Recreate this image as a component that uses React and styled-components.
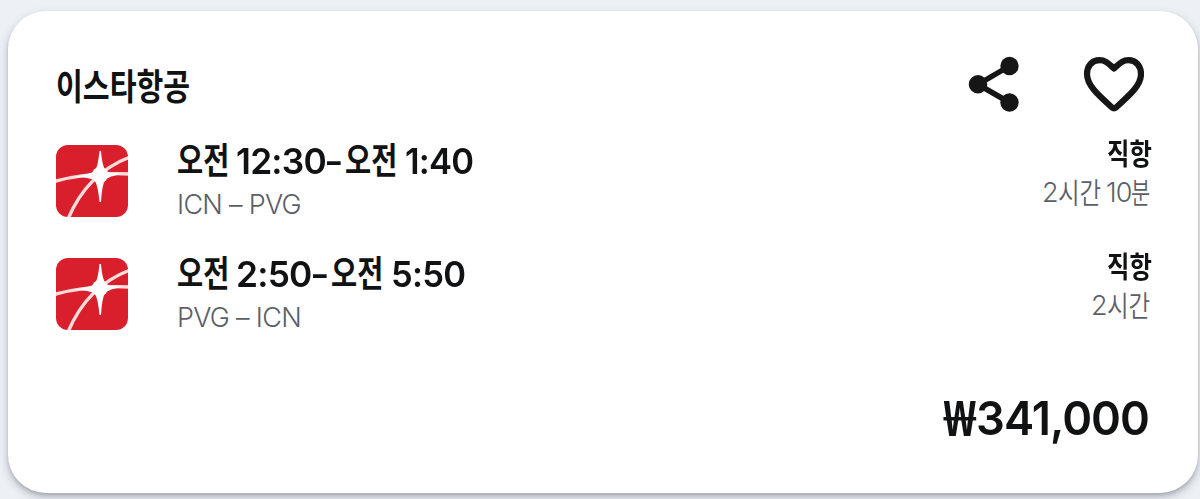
import React from 'react';
import styled, { createGlobalStyle } from 'styled-components';

const GlobalStyle = createGlobalStyle`
  * {
    box-sizing: border-box;
  }

  body {
    margin: 0;
    background: #edf1f6;
    overflow: hidden;
    font-family: Inter, 'Noto Sans CJK KR', sans-serif;
  }
`;

const Page = styled.div`
  height: 499px;
  padding: 11px 2px 6px 8px;
`;

const Card = styled.article`
  height: 482px;
  padding: 40px 48px 0;
  border-radius: 38px;
  background: #fff;
  color: #111213;
  box-shadow: 0 4px 9px rgba(60, 66, 78, 0.34), 0 2px 3px rgba(60, 66, 78, 0.14);
`;

const Header = styled.header`
  height: 67px;
  display: flex;
  justify-content: space-between;
`;

const Actions = styled.div`
  display: flex;
  gap: 48px;
  margin-right: 6px;
`;

const IconButton = styled.button`
  width: 72px;
  height: 67px;
  padding: 0;
  border: 0;
  background: none;
  color: #161616;

  svg {
    display: block;
  }
`;

const Line = styled.div`
  display: flex;
  height: ${({ $height }) => $height}px;
  line-height: ${({ $height }) => $height}px;
  margin-top: ${({ $top }) => $top || 0}px;
  justify-content: ${({ $end }) => ($end ? 'flex-end' : 'flex-start')};
  color: ${({ $muted }) => ($muted ? '#5b6067' : '#111213')};
  font-weight: ${({ $muted }) => ($muted ? 350 : 600)};
  white-space: pre;
`;

const Run = styled.span`
  flex: none;
  width: ${({ $width }) => $width}px;
  font-size: ${({ $size }) => $size}px;
  letter-spacing: ${({ $spacing }) => $spacing || 0}px;
  transform: scaleX(${({ $scale }) => $scale || 1});
  transform-origin: left center;
`;

const Hangul = styled(Run)`
  font-family: 'Noto Sans CJK KR', sans-serif;
  font-weight: ${({ $light }) => ($light ? 350 : 700)};
  transform: translateY(${({ $lift }) => -($lift || 0)}px) scaleX(${({ $scale }) => $scale});
`;

const Leg = styled.section`
  height: 113px;
  display: flex;
`;

const Logo = styled.svg`
  flex: none;
  width: 72px;
  height: 72px;
  margin: 27px 49px 0 0;
  border-radius: 12px;
`;

const Schedule = styled.div`
  flex: 1;
  padding-top: 20px;
`;

const Duration = styled.div`
  width: 120px;
  padding-top: 14px;
`;

const Price = styled.div`
  display: flex;
  justify-content: flex-end;
  margin-top: 44px;
  height: 60px;
  line-height: 60px;
  font-weight: 600;
`;

const Won = styled(Run)`
  font-family: 'Noto Sans', 'Noto Sans CJK KR', sans-serif;
  font-weight: 700;
`;

const legs = [
  {
    id: 'out',
    depart: '12:30',
    departWidth: 91,
    arrive: '1:40',
    route: 'ICN – PVG',
    hours: '2',
    minutes: '10',
  },
  {
    id: 'back',
    depart: '2:50',
    departWidth: 77,
    arrive: '5:50',
    route: 'PVG – ICN',
    hours: '2',
  },
];

function AirlineLogo({ id }) {
  return (
    <Logo viewBox="0 0 72 72">
      <defs>
        <filter id={`soft-${id}`} x="-20%" y="-20%" width="140%" height="140%">
          <feGaussianBlur stdDeviation="0.7" />
        </filter>
      </defs>
      <rect width="72" height="72" fill="#d91f2c" />
      <g fill="none" stroke="#ffdcdc" filter={`url(#soft-${id})`}>
        <path d="M-2 36.500 Q32 27 74 29" strokeWidth="3.4" />
        <path d="M12 74 C22 50 40 25 74 12" strokeWidth="3.4" />
      </g>
      <g fill="#fff" filter={`url(#soft-${id})`}>
        <path d="M43.500 6 L45 6 Q46 21 50 26 Q54 28 66 29 Q53 31 49 35 Q46 40 45 57 L43.500 57 Q42 41 39 36 Q34 32 18 32 Q34 29 39 26 Q42 21 43.500 6Z" />
        <circle cx="44" cy="30" r="8" />
      </g>
    </Logo>
  );
}

function FlightLeg({ leg }) {
  return (
    <Leg>
      <AirlineLogo id={leg.id} />
      <Schedule>
        <Line $height={46}>
          <Hangul $size={36} $width={59} $scale={0.79} $lift={3}>오전</Hangul>
          <Run $size={36} $width={leg.departWidth} $spacing={-0.8} $scale={0.98}>{leg.depart}</Run>
          <Run $size={36} $width={18} $scale={0.76}>–</Run>
          <Hangul $size={36} $width={60} $scale={0.79} $lift={3}>오전</Hangul>
          <Run $size={36} $width={80} $spacing={-0.8} $scale={0.96}>{leg.arrive}</Run>
        </Line>
        <Line $height={36} $top={3} $muted>
          <Run $size={27} $width={150} $spacing={-0.7}>{leg.route}</Run>
        </Line>
      </Schedule>
      <Duration>
        <Line $height={40} $end>
          <Hangul $size={29} $width={43} $scale={0.84} $lift={0}>직항</Hangul>
        </Line>
        <Line $height={36} $top={3} $end $muted>
          <Run $size={27} $width={16}>{leg.hours}</Run>
          <Hangul $size={29} $width={leg.minutes ? 48 : 43} $scale={0.81} $lift={2} $light>시간</Hangul>
          {leg.minutes && (
            <>
              <Run $size={27} $width={25} $spacing={-1}>{leg.minutes}</Run>
              <Hangul $size={29} $width={19} $scale={0.72} $lift={2} $light>분</Hangul>
            </>
          )}
        </Line>
      </Duration>
    </Leg>
  );
}

function App() {
  return (
    <>
      <GlobalStyle />
      <Page>
        <Card>
          <Header>
            <Line $height={66} $top={1}>
              <Hangul $size={36} $width={140} $scale={0.81} $lift={1}>이스타항공</Hangul>
            </Line>
            <Actions>
              <IconButton aria-label="공유">
                <svg width="72" height="67" viewBox="0 0 72 67">
                  <path d="M57.5 15 26 33.5 57.5 51.5" fill="none" stroke="currentColor" strokeWidth="5.5" />
                  <circle cx="57.5" cy="15" r="9.2" fill="currentColor" />
                  <circle cx="26" cy="33.3" r="9.2" fill="currentColor" />
                  <circle cx="57.5" cy="51.5" r="9.2" fill="currentColor" />
                </svg>
              </IconButton>
              <IconButton aria-label="찜">
                <svg width="72" height="67" viewBox="0 0 72 67">
                  <path
                    d="M42 17.5 C37 13 34 9.2 27.500 9.2 C20 9.2 15 15 15 23 C15 34 25 43 40 56.500 Q42 58 44 56.500 C59 43 69 34 69 23 C69 15 64 9.2 56.500 9.2 C50 9.2 47 13 42 17.5Z"
                    fill="none"
                    stroke="currentColor"
                    strokeWidth="6.2"
                    strokeLinejoin="round"
                  />
                </svg>
              </IconButton>
            </Actions>
          </Header>
          {legs.map((leg) => (
            <FlightLeg key={leg.id} leg={leg} />
          ))}
          <Price>
            <Won $size={48} $width={33} $scale={0.95}>₩</Won>
            <Run $size={47} $width={174} $spacing={-1} $scale={0.965}>341,000</Run>
          </Price>
        </Card>
      </Page>
    </>
  );
}

export default App;
